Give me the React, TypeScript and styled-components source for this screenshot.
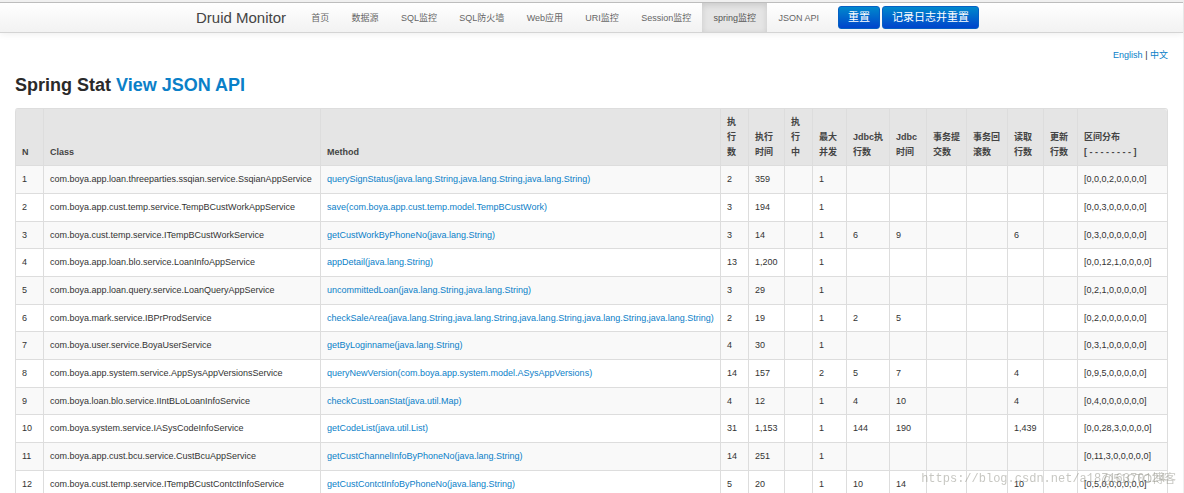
import React from "react";
import styled, { createGlobalStyle } from "styled-components";

const GlobalStyle = createGlobalStyle`
  * { box-sizing: border-box; }
  html { overflow: hidden; height: 100%; }
  body {
    margin: 0;
    height: 100%;
    overflow: hidden;
    background: #fff;
    color: #333;
    font-family: "Liberation Sans", Arial, "Noto Sans CJK SC", sans-serif;
    font-size: 9px;
    line-height: 15px;
  }
`;

const Page = styled.div`
  min-height: 100vh;
  border-right: 1px solid #f0f0f0;
`;

const NavBar = styled.header`
  display: flex;
  align-items: stretch;
  height: 33px;
  padding-left: 184px;
  border-top: 3px solid #c4c4c4;
  border-bottom: 1px solid #d4d4d4;
  border-image: linear-gradient(#f0f0f0 0 2px, #bdbdbd 2px 3px, #d4d4d4 3px) 3 0 1 0;
  background: linear-gradient(#fff, #f2f2f2);
  box-shadow: 0 1px 7px rgba(0, 0, 0, 0.07);
`;

const Brand = styled.a`
  padding: 0 14px 0 12px;
  color: #444;
  font-size: 15px;
  line-height: 30px;
  text-decoration: none;
`;

const Nav = styled.nav`
  display: flex;
  flex: 0 0 530px;
`;

const NavLink = styled.a<{ $active?: boolean }>`
  flex: 1 0 auto;
  padding: 0 11px;
  line-height: 30px;
  text-align: center;
  color: ${(p) => (p.$active ? "#555" : "#666")};
  background: ${(p) => (p.$active ? "#e5e5e5" : "transparent")};
  box-shadow: ${(p) => (p.$active ? "inset 0 2px 6px rgba(0, 0, 0, 0.125)" : "none")};
  text-decoration: none;
  white-space: nowrap;
`;

const Actions = styled.div`
  display: flex;
  align-items: center;
  gap: 2px;
  margin-left: 8px;
`;

const PrimaryButton = styled.button`
  height: 23px;
  padding: 0 9px;
  border: 1px solid #0560c4;
  border-radius: 3px;
  background: linear-gradient(#0088cc, #0044cc);
  color: #fff;
  font: 11px/15px "Liberation Sans", Arial, "Noto Sans CJK SC", sans-serif;
  white-space: nowrap;
`;

const Link = styled.a`
  color: #0a80c8;
  text-decoration: none;
`;

const Main = styled.main`
  padding: 15px 15px 0;
`;

const Languages = styled.div`
  text-align: right;
`;

const Title = styled.h1`
  margin: 7px 0 8px;
  font-size: 18px;
  line-height: 30px;
  color: #2a2a2a;
`;

const StatTable = styled.table`
  width: 100%;
  table-layout: fixed;
  border: 1px solid #ddd;
  border-left: 0;
  border-radius: 3px;
  border-collapse: separate;
  border-spacing: 0;
`;

const HeadCell = styled.th`
  padding: 6px 6px 5px;
  border-left: 1px solid #ddd;
  background: #e5e5e5;
  color: #444;
  text-align: left;
  vertical-align: bottom;
  white-space: pre-line;
  &:first-child { border-top-left-radius: 3px; }
  &:last-child { border-top-right-radius: 3px; }
`;

const Row = styled.tr`
  height: 28px;
  &:nth-child(3n) { height: 27px; }
  &:nth-child(odd) { background: #f9f9f9; }
`;

const Cell = styled.td`
  padding: 0 6px;
  border-top: 1px solid #ddd;
  border-left: 1px solid #ddd;
  white-space: nowrap;
`;

const Watermarks = styled.div`
  position: fixed;
  right: 8px;
  bottom: 5px;
  display: grid;
  justify-items: end;
  align-items: center;
  color: rgba(130, 130, 120, 0.45);
  line-height: 18px;
  pointer-events: none;
  & > * { grid-area: 1 / 1; }
`;

const BlogMark = styled.span`
  padding-right: 10px;
  font-family: "Liberation Mono", monospace;
  font-size: 12px;
`;

const SiteMark = styled.span`
  font-size: 12px;
`;

const columns: { label: string; width?: number }[] = [
  { label: "N", width: 28 },
  { label: "Class", width: 277 },
  { label: "Method" },
  { label: "执行数", width: 28 },
  { label: "执行时间", width: 36 },
  { label: "执行中", width: 28 },
  { label: "最大并发", width: 34 },
  { label: "Jdbc执行数", width: 43 },
  { label: "Jdbc时间", width: 37 },
  { label: "事务提交数", width: 40 },
  { label: "事务回滚数", width: 41 },
  { label: "读取行数", width: 36 },
  { label: "更新行数", width: 34 },
  { label: "区间分布\n[ - - - - - - - - ]", width: 90 },
];

type Stat = [string, string, string, string, string, string, string, string, string];

/* class, method, runs, time, concurrency, jdbc runs, jdbc time, rows read, histogram */
const stats: Stat[] = [
  ["com.boya.app.loan.threeparties.ssqian.service.SsqianAppService", "querySignStatus(java.lang.String,java.lang.String,java.lang.String)", "2", "359", "1", "", "", "", "[0,0,0,2,0,0,0,0]"],
  ["com.boya.app.cust.temp.service.TempBCustWorkAppService", "save(com.boya.app.cust.temp.model.TempBCustWork)", "3", "194", "1", "", "", "", "[0,0,3,0,0,0,0,0]"],
  ["com.boya.cust.temp.service.ITempBCustWorkService", "getCustWorkByPhoneNo(java.lang.String)", "3", "14", "1", "6", "9", "6", "[0,3,0,0,0,0,0,0]"],
  ["com.boya.app.loan.blo.service.LoanInfoAppService", "appDetail(java.lang.String)", "13", "1,200", "1", "", "", "", "[0,0,12,1,0,0,0,0]"],
  ["com.boya.app.loan.query.service.LoanQueryAppService", "uncommittedLoan(java.lang.String,java.lang.String)", "3", "29", "1", "", "", "", "[0,2,1,0,0,0,0,0]"],
  ["com.boya.mark.service.IBPrProdService", "checkSaleArea(java.lang.String,java.lang.String,java.lang.String,java.lang.String,java.lang.String)", "2", "19", "1", "2", "5", "", "[0,2,0,0,0,0,0,0]"],
  ["com.boya.user.service.BoyaUserService", "getByLoginname(java.lang.String)", "4", "30", "1", "", "", "", "[0,3,1,0,0,0,0,0]"],
  ["com.boya.app.system.service.AppSysAppVersionsService", "queryNewVersion(com.boya.app.system.model.ASysAppVersions)", "14", "157", "2", "5", "7", "4", "[0,9,5,0,0,0,0,0]"],
  ["com.boya.loan.blo.service.IIntBLoLoanInfoService", "checkCustLoanStat(java.util.Map)", "4", "12", "1", "4", "10", "4", "[0,4,0,0,0,0,0,0]"],
  ["com.boya.system.service.IASysCodeInfoService", "getCodeList(java.util.List)", "31", "1,153", "1", "144", "190", "1,439", "[0,0,28,3,0,0,0,0]"],
  ["com.boya.app.cust.bcu.service.CustBcuAppService", "getCustChannelInfoByPhoneNo(java.lang.String)", "14", "251", "1", "", "", "", "[0,11,3,0,0,0,0,0]"],
  ["com.boya.cust.temp.service.ITempBCustContctInfoService", "getCustContctInfoByPhoneNo(java.lang.String)", "5", "20", "1", "10", "14", "10", "[0,5,0,0,0,0,0,0]"],
];

const links = ["首页", "数据源", "SQL监控", "SQL防火墙", "Web应用", "URI监控", "Session监控", "spring监控", "JSON API"];

export default function App() {
  return (
    <Page>
      <GlobalStyle />
      <NavBar>
        <Brand href="#">Druid Monitor</Brand>
        <Nav>
          {links.map((label) => (
            <NavLink key={label} href="#" $active={label === "spring监控"}>{label}</NavLink>
          ))}
        </Nav>
        <Actions>
          <PrimaryButton type="button">重置</PrimaryButton>
          <PrimaryButton type="button">记录日志并重置</PrimaryButton>
        </Actions>
      </NavBar>
      <Main>
        <Languages>
          <Link href="#">English</Link> | <Link href="#">中文</Link>
        </Languages>
        <Title>Spring Stat <Link href="#">View JSON API</Link></Title>
        <StatTable>
          <colgroup>
            {columns.map((c) => <col key={c.label} width={c.width} />)}
          </colgroup>
          <thead>
            <tr>{columns.map((c) => <HeadCell key={c.label} scope="col">{c.label}</HeadCell>)}</tr>
          </thead>
          <tbody>
            {stats.map(([cls, method, runs, time, peak, jdbc, jdbcTime, read, histogram], i) => (
              <Row key={cls}>
                <Cell>{i + 1}</Cell>
                <Cell>{cls}</Cell>
                <Cell><Link href="#">{method}</Link></Cell>
                <Cell>{runs}</Cell>
                <Cell>{time}</Cell>
                <Cell />
                <Cell>{peak}</Cell>
                <Cell>{jdbc}</Cell>
                <Cell>{jdbcTime}</Cell>
                <Cell />
                <Cell />
                <Cell>{read}</Cell>
                <Cell />
                <Cell>{histogram}</Cell>
              </Row>
            ))}
          </tbody>
        </StatTable>
      </Main>
      <Watermarks>
        <BlogMark>https://blog.csdn.net/a18716370124</BlogMark>
        <SiteMark>@51CTO博客</SiteMark>
      </Watermarks>
    </Page>
  );
}
